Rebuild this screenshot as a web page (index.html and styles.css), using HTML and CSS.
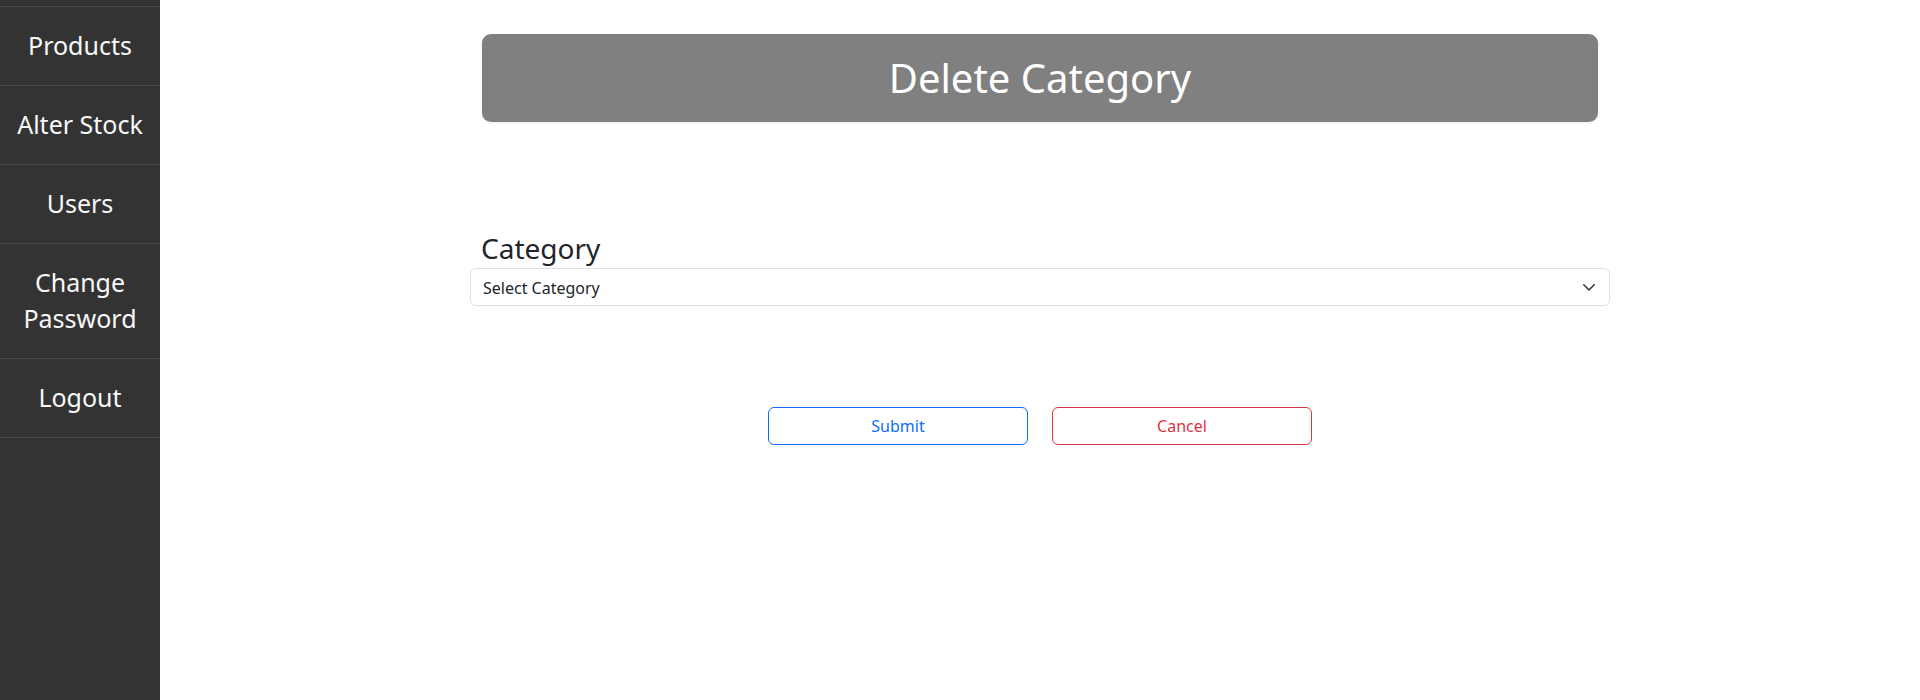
FILE: index.html
```html
<!DOCTYPE html>
<html lang="en">
<head>
<meta charset="utf-8">
<title>Delete Category</title>
<link rel="stylesheet" href="styles.css">
</head>
<body>
<div class="layout">
  <nav class="sidebar">
    <div class="nav-top"></div>
    <a class="nav-item">Products</a>
    <a class="nav-item">Alter Stock</a>
    <a class="nav-item">Users</a>
    <a class="nav-item">Change<br>Password</a>
    <a class="nav-item">Logout</a>
  </nav>
  <main class="main">
    <div class="form-wrap">
      <div class="page-title">Delete Category</div>
      <label class="field-label">Category</label>
      <div class="select">
        <span class="select-text">Select Category</span>
        <svg class="chevron" width="12" height="7" viewBox="0 0 12 7"><path d="M0.8 0.8 L6 6 L11.2 0.8" fill="none" stroke="#343a40" stroke-width="1.6" stroke-linecap="round" stroke-linejoin="round"/></svg>
      </div>
      <div class="actions">
        <button class="btn btn-submit">Submit</button>
        <button class="btn btn-cancel">Cancel</button>
      </div>
    </div>
  </main>
</div>
</body>
</html>
```

FILE: styles.css
```css
* { box-sizing: border-box; }
html, body {
  margin: 0;
  padding: 0;
  height: 100%;
  background: #fff;
  font-family: "Noto Sans", "Open Sans", sans-serif;
  color: #212529;
}
.layout {
  display: flex;
  height: 700px;
  overflow: hidden;
}
.sidebar {
  width: 160px;
  flex: 0 0 160px;
  background: #333333;
  display: flex;
  flex-direction: column;
}
.nav-top {
  height: 7px;
  border-bottom: 1px solid #474747;
}
.nav-item {
  display: block;
  color: #f8f8f8;
  font-size: 25px;
  line-height: 36px;
  text-align: center;
  padding: 20px 0 22px;
  border-bottom: 1px solid #474747;
  text-decoration: none;
}
.main {
  flex: 1;
  min-width: 0;
}
.form-wrap {
  width: 1140px;
  margin-left: 310px;
  padding-top: 34px;
  display: flex;
  flex-direction: column;
}
.page-title {
  margin: 0 12px;
  height: 88px;
  background: #808080;
  border-radius: 9px;
  color: #fff;
  font-size: 40px;
  line-height: 88px;
  text-align: center;
  box-shadow: 0 1px 3px rgba(0,0,0,0.08);
}
.field-label {
  display: block;
  margin-top: 109px;
  padding-left: 11px;
  font-size: 28px;
  line-height: 34px;
  color: #212529;
}
.select {
  margin-top: 3px;
  height: 38px;
  border: 1px solid #dee2e6;
  border-radius: 6px;
  display: flex;
  align-items: center;
  justify-content: space-between;
  padding: 0 14px 0 12px;
  background: #fff;
}
.select-text {
  display: block;
  padding-top: 2px;
  font-size: 16px;
  color: #212529;
}
.chevron { display: block; }
.actions {
  display: flex;
  justify-content: center;
  gap: 24px;
  margin-top: 101px;
}
.btn {
  width: 260px;
  height: 38px;
  background: #fff;
  border-radius: 6px;
  font-family: "Noto Sans", "Open Sans", sans-serif;
  font-size: 16px;
  line-height: 24px;
  cursor: pointer;
}
.btn-submit {
  border: 1px solid #0d6efd;
  color: #0d6efd;
}
.btn-cancel {
  border: 1px solid #dc3545;
  color: #dc3545;
}
```
